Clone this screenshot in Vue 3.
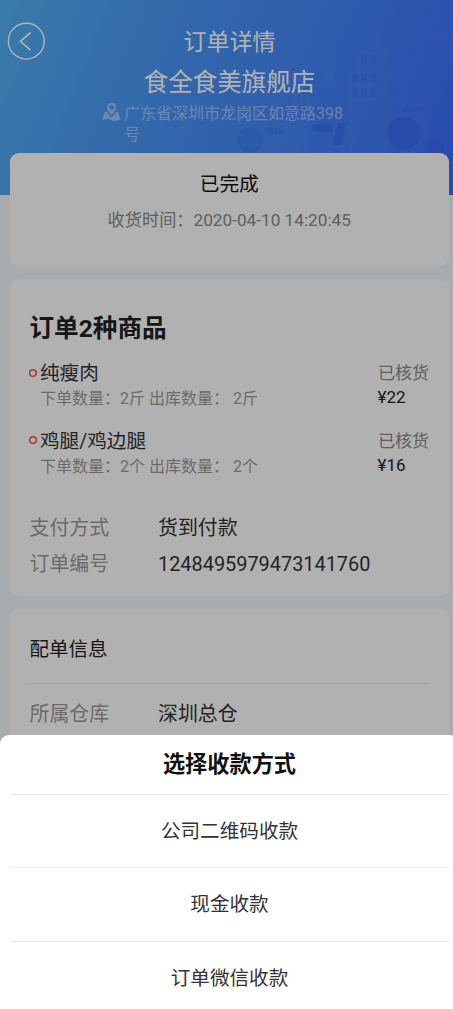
<script setup>
const goods = [
  { name: '纯瘦肉', ordered: '2斤', shipped: '2斤', state: '已核货', price: '¥22' },
  { name: '鸡腿/鸡边腿', ordered: '2个', shipped: '2个', state: '已核货', price: '¥16' },
]
const methods = ['公司二维码收款', '现金收款', '订单微信收款']
</script>

<template>
  <div class="screen">
    <div class="page">
      <header class="hero">
        <svg class="scene" viewBox="0 0 459 195" aria-hidden="true">
          <g fill="#5a8cf5" opacity=".14">
            <ellipse cx="254" cy="13" rx="11" ry="14" />
            <path d="M349 153V71h8V50h9V37h16v13h9v103z" />
            <path d="M399 153V100h32v53z" />
            <path d="M261 153V63h49v90z" />
            <path d="M319 4q6-5 14-4h24q11 0 14 4z" />
          </g>
          <path d="M409 41q10-1 16-7 7-8 16-5 6 0 8 5 6 1 10 7z" fill="#7a78e8" opacity=".12" />
          <g fill="#2552df" opacity=".14">
            <path d="M361 55h6v9h-6zM371 55h6v9h-6zM352 74h6v9h-6zM361 74h6v9h-6zM371 74h6v9h-6zM352 88h6v9h-6zM361 88h6v9h-6zM371 88h6v9h-6z" />
            <path d="M402 107h26v5h-26zM265 128h8v6h-8zM275 128h8v6h-8z" />
            <circle cx="434" cy="148" r="10" />
            <circle cx="250" cy="140" r="13" />
            <path d="M288 97h3v20h-3zM303 97h3v20h-3zM288 105h17v2h-17z" />
          </g>
          <g fill="#2550e4" opacity=".26">
            <circle cx="404" cy="133" r="16.500" />
            <path d="M311 124h22v8h-17q-5-2-5-8zM338 123h8l-5 23h-8z" />
          </g>
          <g fill="#58a5f5" opacity=".16">
            <path d="M322 76q5-9 10-5l2 10-8 4z" />
            <path d="M242 144h56v2h-56zM333 145h10l4 3h-10z" />
          </g>
          <path d="M345 153q-2-27 13-28M351 153q0-22 9-22" fill="none" stroke="#5a8cf5" stroke-width="3" opacity=".12" />
        </svg>
        <svg class="back" viewBox="0 0 38 38" fill="none" stroke="#fff">
          <circle cx="19.300" cy="19.200" r="17.900" stroke-width="1.400" />
          <path d="M23.500 10.500L13.500 19.300L23.500 28.100" stroke-width="1.700" />
        </svg>
        <h1 class="title">订单详情</h1>
        <div class="shop">食全食美旗舰店</div>
        <div class="address">
          <svg class="pin" viewBox="0 0 19 19">
            <path fill="#fff" fill-rule="evenodd" d="M9.600 0C6.900 0 5 2 5 4.500C5 7.300 7.700 9.600 9.600 12.500C11.500 9.600 14.200 7.300 14.200 4.500C14.200 2 12.300 0 9.600 0ZM9.600 2.200A2.300 2.300 0 1 1 9.600 6.800A2.300 2.300 0 1 1 9.600 2.200Z" />
            <path fill="#fff" d="M4.700 8.300L2.700 9.100L0 17L5.700 15.400L11.400 18.300L18.700 16.800L16.200 9L14.400 8.500C13.300 10.500 11.300 12.500 9.600 14.500C8 12.500 5.900 10.500 4.700 8.300Z" />
          </svg>
          <span>广东省深圳市龙岗区如意路398号</span>
        </div>
      </header>

      <main class="cards">
        <section class="card status">
          <div class="state">已完成</div>
          <div class="time">收货时间：2020-04-10 14:20:45</div>
        </section>

        <section class="card order">
          <h2>订单2种商品</h2>
          <div v-for="g in goods" :key="g.name" class="item">
            <svg class="dot" viewBox="0 0 10 10"><circle cx="5" cy="5" r="3.300" fill="none" stroke="#f05050" stroke-width="1.500" /></svg>
            <div class="info">
              <div class="name">{{ g.name }}</div>
              <div class="qty">下单数量：{{ g.ordered }} 出库数量： {{ g.shipped }}</div>
            </div>
            <div class="side">
              <div class="check">{{ g.state }}</div>
              <div class="price">{{ g.price }}</div>
            </div>
          </div>
          <div class="rows">
            <div class="row"><span class="label">支付方式</span><span>货到付款</span></div>
            <div class="row"><span class="label">订单编号</span><span>1248495979473141760</span></div>
          </div>
        </section>

        <section class="card dispatch">
          <h3>配单信息</h3>
          <div class="row"><span class="label">所属仓库</span><span>深圳总仓</span></div>
        </section>
      </main>
    </div>

    <div class="mask">
      <div class="sheet">
        <div class="sheet-title">选择收款方式</div>
        <div v-for="m in methods" :key="m" class="option">{{ m }}</div>
      </div>
    </div>
  </div>
</template>

<style>
html, body { margin: 0; overflow: hidden; }
</style>

<style scoped>
.screen {
  position: relative;
  width: 453px;
  height: 1009px;
  overflow: hidden;
  font-family: Roboto, "Noto Sans CJK SC", sans-serif;
  color: #333;
}
.page { width: 459px; height: 1009px; background: #f3f6fa; overflow: hidden; }
.hero {
  position: relative;
  box-sizing: border-box;
  height: 195px;
  padding-top: 27.500px;
  color: #fff;
  text-align: center;
  background: linear-gradient(112deg, #53b2f4 0%, #4c9ef4 24%, #458af7 55%, #3a6cfa 100%);
}
.scene { position: absolute; inset: 0; width: 459px; height: 195px; }
.back { position: absolute; left: 7px; top: 22px; width: 38px; height: 38px; }
.title, .shop, .address { position: relative; }
.title { margin: 0; font-size: 23px; font-weight: 400; line-height: 30px; }
.shop { margin-top: 9px; font-size: 24.500px; line-height: 32px; }
.address {
  display: flex;
  gap: 3px;
  width: 245px;
  margin: 4px 0 0 102px;
  font-size: 16px;
  line-height: 21px;
  text-align: left;
  opacity: .44;
}
.address span { width: 223px; word-break: break-all; }
.pin { flex: none; width: 19px; height: 19px; }
.cards {
  position: relative;
  display: flex;
  flex-direction: column;
  gap: 13px;
  margin: -42px 10px 0 9.500px;
}
.card { box-sizing: border-box; border-radius: 9px; background: #fefefe; }
.status { height: 112.500px; padding-top: 18px; text-align: center; }
.state { font-size: 19.700px; line-height: 28px; color: #111; }
.time { margin-top: 9px; font-size: 17.200px; line-height: 24px; color: #888; }
.order { height: 317.500px; padding: 32px 20px 0; }
h2 { margin: 0 0 13.500px; font-size: 24.600px; line-height: 36px; font-weight: 700; color: #222; }
.item { display: flex; height: 67.500px; }
.dot { flex: none; width: 10px; height: 10px; margin: 7.500px 2.500px 0 -2px; }
.info { flex: 1; }
.name { font-size: 19.600px; line-height: 28px; }
.qty { font-size: 16px; line-height: 22px; color: #999; white-space: pre; }
.side { width: 51px; font-size: 17px; }
.check { margin-top: -1px; line-height: 28px; color: #888; }
.price { margin-top: -1px; margin-left: -.5px; line-height: 22px; color: #222; }
.rows { margin-top: 19.500px; }
.row { display: flex; height: 36.500px; font-size: 19.900px; line-height: 28px; }
.label { width: 128.500px; color: #999; }
.dispatch { height: 500px; padding: 18px 20px 0; }
h3 {
  margin: 0 0 17px;
  height: 56px;
  border-bottom: 1px solid #e6e6e6;
  font-size: 19.500px;
  font-weight: 400;
  line-height: 46px;
  color: #222;
}
.mask { position: absolute; top: 0; left: 0; width: 459px; height: 1009px; background: rgba(0, 0, 0, .3); }
.sheet {
  position: absolute;
  left: 0;
  right: 0;
  bottom: 0;
  box-sizing: border-box;
  height: 274.500px;
  padding: 0 10.500px;
  border-radius: 9px 9px 0 0;
  background: #fff;
  text-align: center;
}
.sheet-title { height: 59px; font-size: 22.200px; line-height: 58px; font-weight: 700; color: #111; }
.option {
  box-sizing: border-box;
  height: 73.500px;
  border-top: 1.500px solid #ebebeb;
  font-size: 19.600px;
  line-height: 73px;
}
</style>
